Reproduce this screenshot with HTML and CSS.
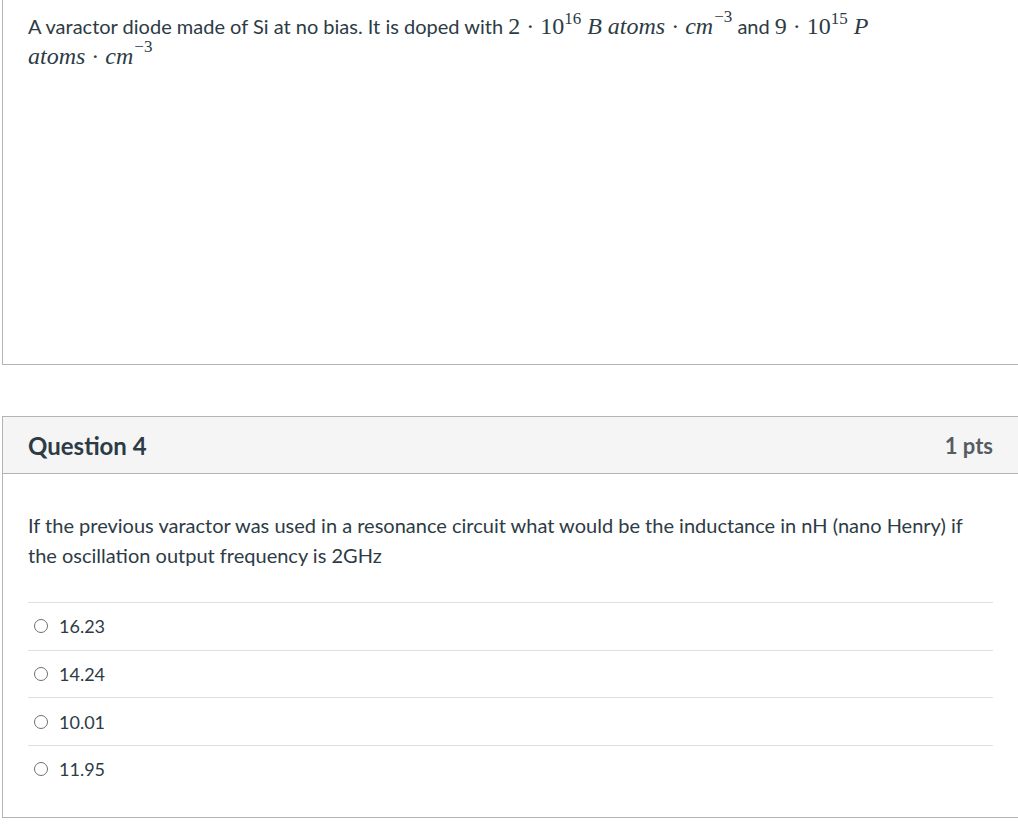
FILE: index.html
```html
<!DOCTYPE html>
<html>
<head>
<meta charset="utf-8">
<link rel="stylesheet" href="styles.css">
</head>
<body>
<div class="card first">
  <div class="text">A varactor diode made of Si at no bias. It is doped with <span class="m"><span class="n">2</span><span class="op">·</span><span class="n">10</span><sup class="sup">16</sup> <i>B</i> <i>atoms</i><span class="op">·</span><i>cm</i><sup class="sup hi">−3</sup></span> and <span class="m"><span class="n">9</span><span class="op">·</span><span class="n">10</span><sup class="sup">15</sup> <i>P</i></span><br><span class="m"><i>atoms</i><span class="op">·</span><i>cm</i><sup class="sup hi">−3</sup></span></div>
</div>

<div class="card second">
  <div class="header">
    <h2 class="title">Question 4</h2>
    <div class="pts">1 pts</div>
  </div>
  <div class="body">
    <p class="q">If the previous varactor was used in a resonance circuit what would be the inductance in nH (nano Henry) if the oscillation output frequency is 2GHz</p>
    <div class="answers">
      <div class="ans"><span class="radio"></span><span>16.23</span></div>
      <div class="ans"><span class="radio"></span><span>14.24</span></div>
      <div class="ans"><span class="radio"></span><span>10.01</span></div>
      <div class="ans"><span class="radio"></span><span>11.95</span></div>
    </div>
  </div>
</div>
</body>
</html>
```

FILE: styles.css
```css
html, body {
  margin: 0;
  padding: 0;
  background: #fff;
  overflow: hidden;
}
body {
  font-family: Lato, "Open Sans", sans-serif;
  color: #2d3b45;
  font-size: 20px;
}
.card {
  border: 1px solid #b4b4b4;
  margin-left: 2px;
  margin-right: -20px;
  background: #fff;
}
.first {
  margin-top: -20px;
  height: 385px;
  box-sizing: border-box;
  padding: 30px 0 0 25px;
}
.text {
  line-height: 30px;
}
.m {
  font-family: "Liberation Serif", "DejaVu Serif", serif;
  font-size: 24px;
  line-height: 0;
}
.m i {
  font-style: italic;
}
.op {
  margin: 0 6px;
}
.sup {
  font-size: 17px;
  vertical-align: 0;
  position: relative;
  top: -10px;
  line-height: 0;
}
.sup.hi {
  top: -12px;
  margin-left: 1px;
}
.second {
  margin-top: 51px;
  height: 402px;
  box-sizing: border-box;
}
.header {
  background: #f5f5f5;
  border-bottom: 1px solid #b4b4b4;
  height: 57px;
  box-sizing: border-box;
  display: flex;
  align-items: center;
  justify-content: space-between;
  padding: 0 44px 0 25px;
}
.title {
  margin: 0;
  font-size: 24px;
  font-weight: 700;
  color: #2d3b45;
}
.pts {
  font-size: 22px;
  font-weight: 700;
  color: #555d63;
}
.body {
  padding: 36px 44px 0 25px;
}
.q {
  margin: 0;
  line-height: 30px;
}
.answers {
  margin-top: 32px;
}
.ans {
  border-top: 1px solid #dde0e2;
  height: 46.7px;
  display: flex;
  align-items: center;
  font-size: 18px;
}
.radio {
  width: 12px;
  height: 12px;
  border: 1px solid #6b7277;
  border-radius: 50%;
  margin: 0 11px 0 6px;
  box-sizing: content-box;
}
```
